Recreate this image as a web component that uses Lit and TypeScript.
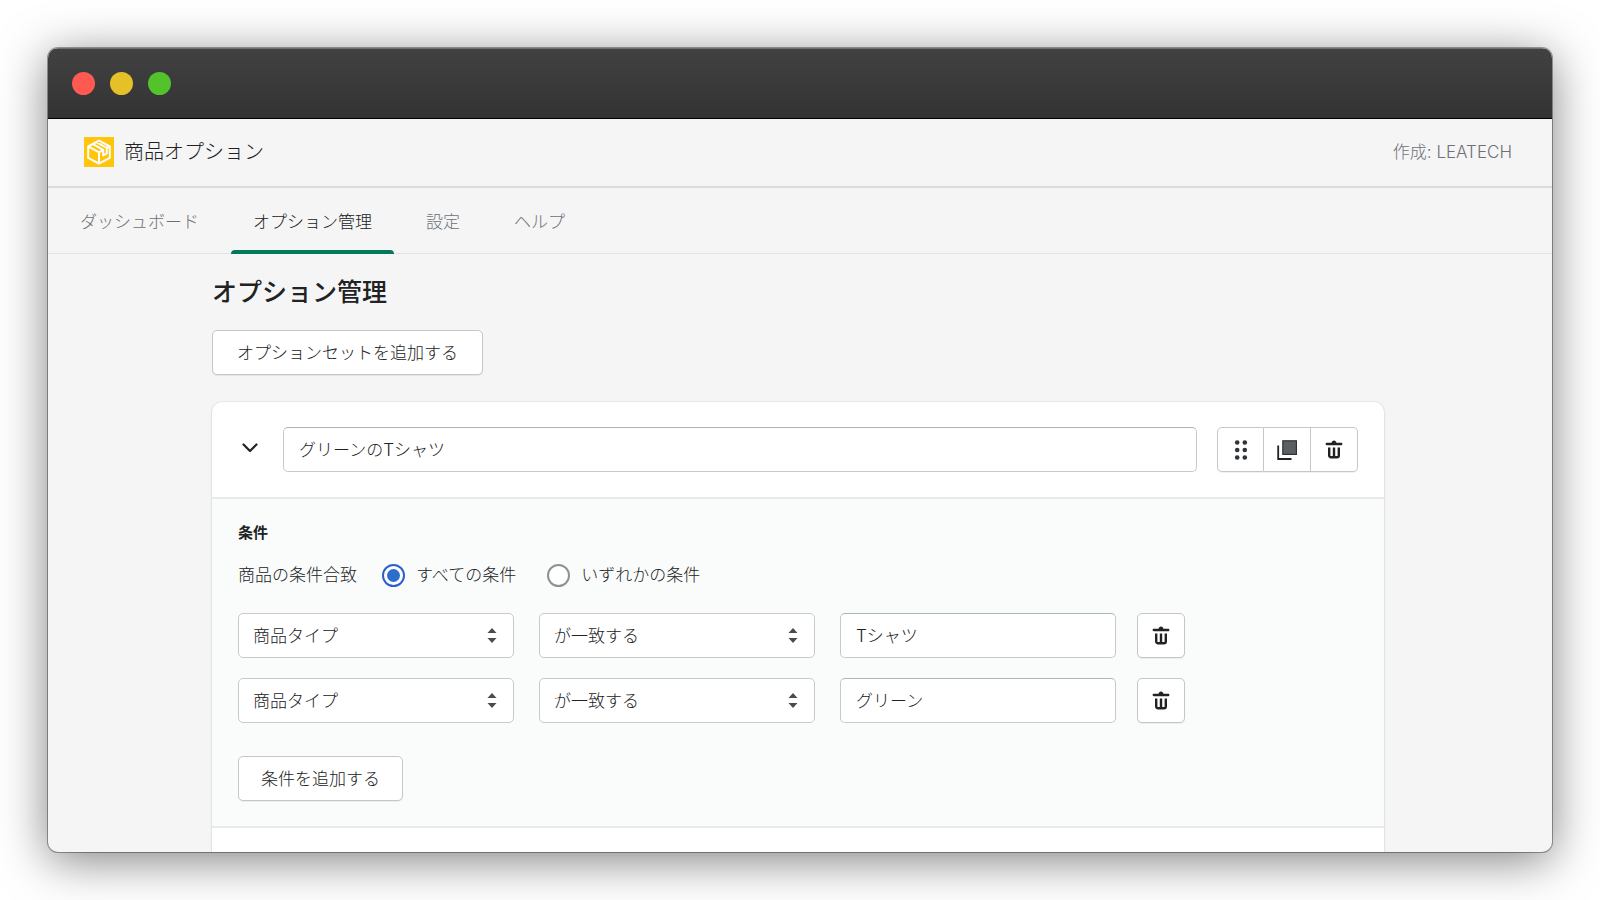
import { LitElement, html, css, svg } from "lit";
import { customElement, state } from "lit/decorators.js";

const trashIcon = svg`
  <svg class="icon trash" viewBox="0 0 20 20" fill="currentColor" aria-hidden="true">
    <path d="M8 3.994C8 2.893 8.895 2 10 2s2 .893 2 1.994h4c.552 0 1 .446 1 .997a1 1 0 0 1-1 .997H4c-.552 0-1-.447-1-.997s.448-.997 1-.997h4zM5 14.508V8h2v6.508a.5.5 0 0 0 .5.498H9V8h2v7.006h1.500a.5.5 0 0 0 .5-.498V8h2v6.508A2.495 2.495 0 0 1 12.500 17h-5C6.120 17 5 15.884 5 14.508z"/>
  </svg>`;

const dragIcon = svg`
  <svg class="icon" viewBox="0 0 20 20" fill="#303437" aria-hidden="true">
    <circle cx="6.200" cy="2.500" r="2.300"/><circle cx="13.800" cy="2.500" r="2.300"/>
    <circle cx="6.200" cy="10" r="2.300"/><circle cx="13.800" cy="10" r="2.300"/>
    <circle cx="6.200" cy="17.500" r="2.300"/><circle cx="13.800" cy="17.500" r="2.300"/>
  </svg>`;

const copyIcon = svg`
  <svg class="icon" viewBox="0 0 20 20" aria-hidden="true">
    <path d="M1.200 5.500V19h13.300" fill="none" stroke="#202223" stroke-width="1.800"/>
    <rect x="5.800" y="0.800" width="13.600" height="13.600" fill="#5c5f62" stroke="#303335" stroke-width="1.200"/>
  </svg>`;

const caretsIcon = svg`
  <svg class="carets" viewBox="0 0 10 15" fill="#4a4d50" aria-hidden="true">
    <path d="M0.500 5L5 0l4.500 5zM0.500 10h9L5 15z"/>
  </svg>`;

interface Condition {
  field: string;
  operator: string;
  value: string;
}

@customElement("app-root")
export class AppRoot extends LitElement {
  @state() private tabs = ["ダッシュボード", "オプション管理", "設定", "ヘルプ"];
  @state() private activeTab = 1;
  @state() private match = "all";
  @state() private conditions: Condition[] = [
    { field: "商品タイプ", operator: "が一致する", value: "Tシャツ" },
    { field: "商品タイプ", operator: "が一致する", value: "グリーン" },
  ];

  static styles = css`
    :host {
      display: block;
      box-sizing: border-box;
      height: 100vh;
      padding: 48px;
      overflow: hidden;
      background: #fff;
      color: #202223;
      font: 300 17px/24px Inter, "Noto Sans CJK JP", sans-serif;
    }
    *, *::before, *::after { box-sizing: border-box; }
    .window {
      display: flex;
      flex-direction: column;
      height: 100%;
      overflow: hidden;
      border-radius: 10px;
      background: #f5f5f5;
      box-shadow: 0 0 0 1px rgba(0, 0, 0, 0.35), 0 8px 48px rgba(0, 0, 0, 0.5);
    }
    .titlebar {
      display: flex;
      flex: none;
      align-items: center;
      gap: 15px;
      height: 71px;
      padding: 0 24px;
      border-top: 1px solid #717171;
      border-bottom: 1px solid #000;
      background: linear-gradient(#414141, #333);
    }
    .light { width: 23px; height: 23px; border-radius: 50%; }
    .red { background: #ff5a52; }
    .yellow { background: #e6c029; }
    .green { background: #53c22b; }
    .appbar {
      display: flex;
      flex: none;
      align-items: center;
      justify-content: space-between;
      height: 69px;
      padding: 0 40px 2px 36px;
      border-bottom: 2px solid #d9dbde;
    }
    .brand { display: flex; align-items: center; gap: 10px; font-size: 20px; }
    .logo { display: block; width: 30px; height: 30px; }
    .author, .tab { color: #6d7175; }
    .tabs {
      display: flex;
      flex: none;
      gap: 10px;
      height: 66px;
      padding: 0 10px;
      border-bottom: 1px solid #e1e3e5;
    }
    .tab {
      padding: 3px 22px 0;
      line-height: 62px;
      text-decoration: none;
    }
    .tab.active { position: relative; color: #202223; }
    .tab.active::after {
      content: "";
      position: absolute;
      inset: auto 0 -1px;
      height: 4px;
      border-radius: 4px 4px 0 0;
      background: #007a5a;
    }
    main { padding: 22px 168px 0 164px; }
    h1 { margin: 0 0 22px; font-size: 25px; line-height: 32px; font-weight: 500; }
    button, input, select { font: inherit; color: inherit; margin: 0; }
    button, .field {
      height: 45px;
      border: 1px solid #c6cace;
      border-radius: 5px;
      background: #fff;
    }
    button { border-color: #c3c7cb; box-shadow: 0 1px 0 rgba(0, 0, 0, 0.06); }
    .text-button { padding: 0 22px; }
    .text-button.wide { padding: 0 24px; }
    .field { width: 100%; padding: 0 14px; appearance: none; }
    input.field { padding: 0 15px 2px; border-top-color: #aeb4b9; }
    .card {
      margin-top: 27px;
      border-radius: 10px 10px 0 0;
      background: #fff;
      box-shadow: 0 0 0 1px rgba(63, 63, 68, 0.05), 0 1px 3px rgba(63, 63, 68, 0.1);
    }
    .card-head {
      display: flex;
      align-items: center;
      height: 95px;
      padding: 0 26px;
    }
    .collapse {
      width: 25px;
      padding: 0;
      margin-right: 20px;
      border: 0;
      background: none;
      box-shadow: none;
    }
    .chevron { display: block; width: 16px; height: 10px; margin: 0 auto 3px 4px; }
    .name { flex: 1; }
    .group { display: flex; margin-left: 20px; }
    .group .icon-button { width: 47px; border-left-width: 0; border-radius: 0; }
    .group .icon-button:first-child { border-left-width: 1px; border-radius: 5px 0 0 5px; }
    .group .icon-button:last-child { border-radius: 0 5px 5px 0; }
    .icon-button {
      display: grid;
      place-items: center;
      flex: none;
      width: 48px;
      padding: 0;
    }
    .icon { display: block; width: 20px; height: 20px; }
    .trash { width: 24px; height: 24px; }
    .section {
      padding: 24px 26px 25px;
      border: solid #e8eaeb;
      border-width: 2px 0;
      background: #fafcfb;
    }
    h2 { margin: 0; font-size: 15px; line-height: 20px; font-weight: 700; }
    .match {
      display: flex;
      align-items: center;
      margin: 0 0 26px;
      padding: 20px 0 0;
    }
    .match-label { margin-right: 25px; }
    .choice { display: flex; align-items: center; gap: 11px; margin-right: 31px; }
    input[type="radio"] {
      appearance: none;
      display: grid;
      place-items: center;
      width: 23px;
      height: 23px;
      border: 2px solid #8c9196;
      border-radius: 50%;
      background: #fff;
    }
    input[type="radio"]:checked { border-color: #2c5fcb; }
    input[type="radio"]:checked::before {
      content: "";
      width: 13px;
      height: 13px;
      border-radius: 50%;
      background: #2c6ecb;
    }
    .condition { display: flex; gap: 25px; margin-bottom: 20px; }
    .cell { position: relative; flex: 0 1 276px; }
    .condition .icon-button { margin-left: -4px; }
    .carets {
      position: absolute;
      top: 15px;
      right: 17px;
      width: 10px;
      height: 15px;
      pointer-events: none;
    }
    .section .text-button { margin-top: 13px; }
    .rest { height: 200px; }
  `;

  private renderCondition(c: Condition) {
    return html`
      <div class="condition">
        <div class="cell">
          <select class="field" aria-label="商品の条件"><option>${c.field}</option></select>${caretsIcon}
        </div>
        <div class="cell">
          <select class="field" aria-label="比較方法"><option>${c.operator}</option></select>${caretsIcon}
        </div>
        <div class="cell"><input class="field" type="text" aria-label="値" .value=${c.value} /></div>
        <button class="icon-button" type="button" aria-label="条件を削除">${trashIcon}</button>
      </div>`;
  }

  render() {
    return html`
      <div class="window">
        <div class="titlebar">
          <span class="light red"></span><span class="light yellow"></span><span class="light green"></span>
        </div>
        <header class="appbar">
          <div class="brand">
            <svg class="logo" viewBox="0 0 30 30" aria-hidden="true">
              <rect width="30" height="30" fill="#ffc40c"/>
              <path d="M15 3.600L25.800 9.300v11.600L15 26.600 4.200 20.900V9.300z M4.200 9.300L15 15.400l4-2.200M22.600 11.200l3.200-1.900M15 15.400v11.200M8.600 6.900l10.600 5.900v5.600l3.600-2V10.800L12.200 5.100" fill="none" stroke="#fff" stroke-width="2" stroke-linejoin="round"/>
            </svg>
            <span>商品オプション</span>
          </div>
          <span class="author">作成: LEATECH</span>
        </header>
        <nav class="tabs">
          ${this.tabs.map(
            (t, i) => html`<a href="#" class="tab ${i === this.activeTab ? "active" : ""}"
              @click=${(e: Event) => { e.preventDefault(); this.activeTab = i; }}>${t}</a>`
          )}
        </nav>
        <main>
          <h1>オプション管理</h1>
          <button class="text-button wide" type="button">オプションセットを追加する</button>
          <section class="card">
            <div class="card-head">
              <button class="collapse" type="button" aria-label="折りたたむ">
                <svg class="chevron" viewBox="0 0 16 10" aria-hidden="true">
                  <path d="M1.500 1.500L8 8l6.500-6.500" fill="none" stroke="#202223" stroke-width="2.200" stroke-linecap="round" stroke-linejoin="round"/>
                </svg>
              </button>
              <div class="name"><input class="field" type="text" aria-label="オプションセット名" value="グリーンのTシャツ" /></div>
              <div class="group">
                <button class="icon-button" type="button" aria-label="並べ替え">${dragIcon}</button>
                <button class="icon-button" type="button" aria-label="複製">${copyIcon}</button>
                <button class="icon-button" type="button" aria-label="削除">${trashIcon}</button>
              </div>
            </div>
            <div class="section">
              <h2>条件</h2>
              <div class="match" role="radiogroup" aria-labelledby="match-label">
                <span class="match-label" id="match-label">商品の条件合致</span>
                <label class="choice">
                  <input type="radio" name="match" .checked=${this.match === "all"} @change=${() => (this.match = "all")} />すべての条件
                </label>
                <label class="choice">
                  <input type="radio" name="match" .checked=${this.match === "any"} @change=${() => (this.match = "any")} />いずれかの条件
                </label>
              </div>
              ${this.conditions.map((c) => this.renderCondition(c))}
              <button class="text-button" type="button">条件を追加する</button>
            </div>
            <div class="rest"></div>
          </section>
        </main>
      </div>`;
  }
}
